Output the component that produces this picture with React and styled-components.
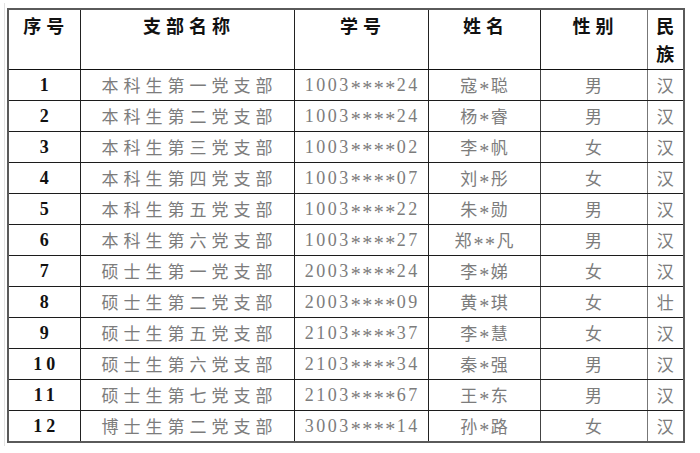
import React from "react";
import styled, { createGlobalStyle } from "styled-components";

const Global = createGlobalStyle`
  html, body { margin: 0; padding: 0; background: #fff; }
  body { width: 700px; height: 453px; overflow: hidden; }
`;

const Frame = styled.div`
  margin: 3px 0 0 4px;
  width: 680px;
  border-left: 1px solid #e2e2e2;
  padding: 5px 0 3px 2px;
`;

const Table = styled.table`
  border-collapse: collapse;
  table-layout: fixed;
  width: 676px;
  border: 2px solid #5a5a5a;
  font-family: "Noto Sans CJK SC", "Liberation Serif", serif;
`;

const HeadCell = styled.th`
  height: 58px;
  padding: 1px 0 0 ${(p) => (p.$ls ? 4 : 0)}px;
  vertical-align: top;
  text-align: center;
  font-family: "Noto Sans CJK SC", sans-serif;
  font-weight: 700;
  font-size: 18px;
  line-height: 28px;
  letter-spacing: ${(p) => (p.$ls ? 5 : 0)}px;
  color: #111;
  border-left: 1px solid ${(p) => p.$line || "#222"};
  border-bottom: 1px solid #111;
`;

const Cell = styled.td`
  height: 30px;
  padding: 0 0 0 ${(p) => p.$ls || 0}px;
  text-align: center;
  vertical-align: middle;
  font-family: ${(p) =>
    p.$serif ? '"Liberation Serif", serif' : '"Noto Sans CJK SC", sans-serif'};
  font-size: ${(p) => (p.$serif ? 18 : 17)}px;
  font-weight: ${(p) => (p.$bold ? 700 : 400)};
  letter-spacing: ${(p) => p.$ls || 0}px;
  line-height: 20px;
  color: ${(p) => (p.$bold ? "#111" : "#7c7c7c")};
  border-left: 1px solid ${(p) => p.$line || "#222"};
  border-bottom: 1px solid #1c1c1c;
  white-space: nowrap;
`;

const Star = styled.span`
  font-family: "Liberation Serif", serif;
  font-size: 20px;
  letter-spacing: 1.5px;
  line-height: 0;
  vertical-align: -0.18em;
`;

const rows = [
  ["本科生第一党支部", "1003", "24", "寇", "聪", "男", "汉"],
  ["本科生第二党支部", "1003", "24", "杨", "睿", "男", "汉"],
  ["本科生第三党支部", "1003", "02", "李", "帆", "女", "汉"],
  ["本科生第四党支部", "1003", "07", "刘", "彤", "女", "汉"],
  ["本科生第五党支部", "1003", "22", "朱", "勋", "男", "汉"],
  ["本科生第六党支部", "1003", "27", "郑", "凡", "男", "汉", 2],
  ["硕士生第一党支部", "2003", "24", "李", "娣", "女", "汉"],
  ["硕士生第二党支部", "2003", "09", "黄", "琪", "女", "壮"],
  ["硕士生第五党支部", "2103", "37", "李", "慧", "女", "汉"],
  ["硕士生第六党支部", "2103", "34", "秦", "强", "男", "汉"],
  ["硕士生第七党支部", "2103", "67", "王", "东", "男", "汉"],
  ["博士生第二党支部", "3003", "14", "孙", "路", "女", "汉"],
];

function Stars({ n }) {
  return <Star>{"*".repeat(n)}</Star>;
}

export default function App() {
  return (
    <>
      <Global />
      <Frame>
        <Table>
          <colgroup>
            <col style={{ width: 72 }} />
            <col style={{ width: 214 }} />
            <col style={{ width: 134 }} />
            <col style={{ width: 112 }} />
            <col style={{ width: 107 }} />
            <col style={{ width: 37 }} />
          </colgroup>
          <thead>
            <tr>
              <HeadCell $ls>序号</HeadCell>
              <HeadCell $ls>支部名称</HeadCell>
              <HeadCell $ls>学号</HeadCell>
              <HeadCell $ls>姓名</HeadCell>
              <HeadCell $ls>性别</HeadCell>
              <HeadCell $line="#777">民族</HeadCell>
            </tr>
          </thead>
          <tbody>
            {rows.map((r, i) => (
              <tr key={i}>
                <Cell $serif $bold $ls={4}>
                  {i + 1}
                </Cell>
                <Cell $ls={5}>{r[0]}</Cell>
                <Cell $serif $ls={2.5}>
                  {r[1]}
                  <Stars n={4} />
                  {r[2]}
                </Cell>
                <Cell $ls={2}>
                  {r[3]}
                  <Stars n={r[7] || 1} />
                  {r[4]}
                </Cell>
                <Cell $line="#444">{r[5]}</Cell>
                <Cell $line="#777">{r[6]}</Cell>
              </tr>
            ))}
          </tbody>
        </Table>
      </Frame>
    </>
  );
}
